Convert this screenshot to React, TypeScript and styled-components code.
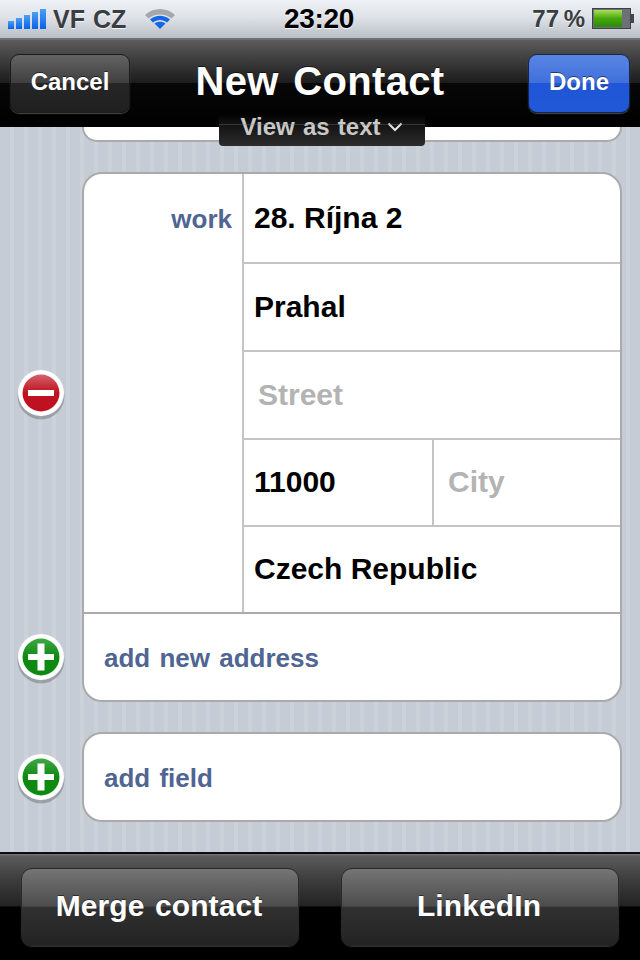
import styled, { createGlobalStyle } from 'styled-components';

const Global = createGlobalStyle`
  html, body { margin: 0; padding: 0; background: #000; }
  * { box-sizing: border-box; }
`

const Screen = styled.div`
  position: relative;
  display: flex;
  flex-direction: column;
  width: 640px;
  height: 960px;
  overflow: hidden;
  font-family: "Liberation Sans", Arial, sans-serif;
  font-weight: bold;
`

const StatusBar = styled.div`
  display: grid;
  grid-template-columns: 1fr auto 1fr;
  align-items: center;
  height: 38px;
  flex: none;
  padding: 0 6px;
  background: linear-gradient(#eef1f5 0%, #dfe3e8 45%, #b9bfc7 100%);
  color: #3a3d42;
  font-size: 24px;
  text-shadow: 0 1px 0 rgba(255, 255, 255, .8);
`

const StatusLeft = styled.div`
  display: flex;
  align-items: center;
  gap: 7px;
  padding-left: 2px;
`

const StatusRight = styled.div`
  display: flex;
  align-items: center;
  justify-content: flex-end;
  gap: 7px;
  word-spacing: -2px;
`

const Clock = styled.div`
  margin-right: 2px;
  color: #000;
  font-size: 28px;
  letter-spacing: -0.3px;
`

const Carrier = styled.span`
  margin-right: 11px;
  font-size: 25px;
  word-spacing: 1px;
`

const NavBar = styled.div`
  position: relative;
  display: grid;
  grid-template-columns: 1fr auto 1fr;
  align-items: center;
  height: 89px;
  flex: none;
  padding: 0 10px 1px 10px;
  border-top: 2px solid #6d6f72;
  background: linear-gradient(#5c5c5c 0%, #3a3a3a 25%, #1c1c1c 49%, #070707 50%, #000 100%);
`

const NavButton = styled.div<{ $primary?: boolean }>`
  display: flex;
  align-items: center;
  justify-content: center;
  justify-self: ${p => (p.$primary ? 'end' : 'start')};
  width: ${p => (p.$primary ? '102px' : '120px')};
  height: 59px;
  padding-bottom: 2px;
  border-radius: 9px;
  color: #fff;
  font-size: 24px;
  border: 1px solid ${p => (p.$primary ? '#16264a' : '#1b1b1b')};
  box-shadow: 0 1px 1px rgba(255, 255, 255, .28);
  background: ${p =>
    p.$primary
      ? 'linear-gradient(#5a86e2 0%, #3f6fdc 49%, #1f55d6 50%, #2059d8 100%)'
      : 'linear-gradient(#636363 0%, #3f3f3f 49%, #262626 50%, #202020 100%)'};
  text-shadow: 0 -1px 0 rgba(0, 0, 0, .5);
`

const Title = styled.div`
  padding-bottom: 4px;
  color: #fff;
  font-size: 40px;
  word-spacing: 3px;
  letter-spacing: 0.35px;
  text-shadow: 0 -1px 0 rgba(0, 0, 0, .6);
`

const ViewTab = styled.div`
  position: absolute;
  top: 113px;
  left: 219px;
  display: flex;
  align-items: center;
  justify-content: center;
  gap: 7px;
  width: 206px;
  height: 33px;
  padding-bottom: 6px;
  border-radius: 0 0 4px 4px;
  background: linear-gradient(#000 0%, #111 30%, #2c2c2c 100%);
  color: #c9c9c9;
  font-size: 24px;
  word-spacing: 1.5px;

  &::after {
    content: "";
    position: absolute;
    top: 11px;
    left: 0;
    right: 0;
    height: 1px;
    background: rgba(120, 120, 120, .35);
  }
`

const Content = styled.div`
  flex: 1;
  display: flex;
  flex-direction: column;
  gap: 30px;
  padding-right: 18px;
  overflow: hidden;
  background: repeating-linear-gradient(90deg, #c5ccd5 0 10px, #cbd2da 10px 14px);
`

const TopCardEdge = styled.div`
  height: 15px;
  margin-left: 82px;
  background: #fff;
  border: 2px solid #aaa;
  border-top: 0;
  border-radius: 0 0 20px 20px;
`

const Section = styled.div`
  display: grid;
  grid-template-columns: 82px 1fr;
`

const Gutter = styled.div`
  display: flex;
  flex-direction: column;
`

const GutterSlot = styled.div<{ $height: number }>`
  display: flex;
  align-items: center;
  justify-content: center;
  height: ${p => p.$height}px;
`

const Card = styled.div`
  background: #fff;
  border: 2px solid #aaa;
  border-radius: 20px;
  overflow: hidden;
`

const AddressBlock = styled.div`
  display: grid;
  grid-template-columns: 160px 1fr;
  border-bottom: 2px solid #aaa;
`

const LabelCell = styled.div`
  padding: 30px 10px 0 0;
  text-align: right;
  color: #4f6592;
  font-size: 26px;
  border-right: 2px solid #c4c4c4;
`

const FieldRow = styled.div<{ $height: number; $last?: boolean }>`
  display: flex;
  height: ${p => p.$height}px;
  border-bottom: ${p => (p.$last ? '0' : '2px solid #c4c4c4')};
`

const Field = styled.div<{ $placeholder?: boolean; $width?: number }>`
  display: flex;
  align-items: center;
  flex: ${p => (p.$width ? 'none' : '1')};
  width: ${p => (p.$width ? `${p.$width}px` : 'auto')};
  padding: 0 0 1px ${p => (p.$placeholder ? '14px' : '10px')};
  color: ${p => (p.$placeholder ? '#b3b3b3' : '#000')};
  font-size: 30px;
  ${p => (p.$width ? 'border-right: 2px solid #c4c4c4;' : '')}
`

const AddRow = styled.div`
  display: flex;
  align-items: center;
  height: 86px;
  padding: 2px 0 0 20px;
  color: #4f6592;
  font-size: 26px;
  word-spacing: 2px;
`

const Toolbar = styled.div`
  display: flex;
  justify-content: space-between;
  height: 108px;
  flex: none;
  padding: 14px 21px 0;
  border-top: 2px solid #0c0c0c;
  background: linear-gradient(#6f6f6f 0 1px, #5b5b5b 2px, #3c3c3c 25%, #232323 49%, #000 50%, #000 100%);
`

const ToolButton = styled.div`
  display: flex;
  align-items: center;
  justify-content: center;
  width: 278px;
  height: 78px;
  padding: 0 2px 2px 0;
  border-radius: 11px;
  border: 1px solid #2a2a2a;
  box-shadow: 0 1px 1px rgba(255, 255, 255, .2);
  background: linear-gradient(#757575 0%, #4c4c4c 49%, #313131 50%, #232323 100%);
  color: #fff;
  font-size: 30px;
  letter-spacing: 0.1px;
  word-spacing: 2px;
  text-shadow: 0 -1px 0 rgba(0, 0, 0, .5);
`

const SignalIcon = () => (
  <svg width="38" height="24" viewBox="0 0 38 24">
    <defs>
      <linearGradient id="sig" x1="0" y1="0" x2="0" y2="1">
        <stop offset="0" stopColor="#4aa0f5" />
        <stop offset="1" stopColor="#0a62e6" />
      </linearGradient>
    </defs>
    {[0, 1, 2, 3, 4].map(i => (
      <rect key={i} x={i * 8} y={14 - i * 3} width="6" height={8 + i * 3} fill="url(#sig)" />
    ))}
  </svg>
)

const WifiIcon = () => (
  <svg width="32" height="24" viewBox="0 0 32 24">
    <path d="M1 8 C9 0 23 0 31 8 L27.5 11.5 C21 6 11 6 4.5 11.5 Z" fill="#a4a8ad" />
    <path d="M6 12.5 C12 7.5 20 7.5 26 12.5 L23 15.5 C19 12 13 12 9 15.5 Z" fill="#1466e6" />
    <path d="M10.5 16.5 C13.5 14.2 18.5 14.2 21.5 16.5 L16 22 Z" fill="#1466e6" />
  </svg>
)

const BatteryIcon = () => (
  <svg width="42" height="22" viewBox="0 0 42 22">
    <defs>
      <linearGradient id="bat" x1="0" y1="0" x2="0" y2="1">
        <stop offset="0" stopColor="#a6e05a" />
        <stop offset=".5" stopColor="#46a80c" />
        <stop offset="1" stopColor="#2c8a06" />
      </linearGradient>
    </defs>
    <rect x="0.5" y="0.5" width="38" height="20" fill="#6d7076" stroke="#3e4046" />
    <rect x="2" y="2" width="28" height="17" fill="url(#bat)" />
    <rect x="39" y="6" width="3" height="9" fill="#44474c" />
  </svg>
)

const RoundBadge = ({ color, light, plus }: { color: string; light: string; plus?: boolean }) => {
  const id = plus ? 'badgePlus' : 'badgeMinus'
  return (
    <svg width="52" height="54" viewBox="0 0 52 54">
      <defs>
        <linearGradient id={id} x1="0" y1="0" x2="0" y2="1">
          <stop offset="0" stopColor={light} />
          <stop offset=".5" stopColor={color} />
          <stop offset="1" stopColor={color} />
        </linearGradient>
      </defs>
      <circle cx="26" cy="30" r="23.5" fill="#000" opacity=".22" />
      <circle cx="26" cy="27" r="23" fill="#fff" />
      <circle cx="26" cy="27" r="18.5" fill={`url(#${id})`} />
      <rect x="13" y="24" width="26" height="6" fill="#fff" />
      {plus && <rect x="22.5" y="13.5" width="7" height="27" fill="#fff" />}
    </svg>
  )
}

const Chevron = () => (
  <svg width="16" height="10" viewBox="0 0 16 10">
    <path d="M1.5 1.5 L8 8 L14.5 1.5" fill="none" stroke="#e4e4e4" strokeWidth="2" />
  </svg>
)

function App() {
  return (
    <Screen>
      <Global />
      <StatusBar>
        <StatusLeft>
          <SignalIcon />
          <Carrier>VF CZ</Carrier>
          <WifiIcon />
        </StatusLeft>
        <Clock>23:20</Clock>
        <StatusRight>
          <span>77 %</span>
          <BatteryIcon />
        </StatusRight>
      </StatusBar>
      <NavBar>
        <NavButton>Cancel</NavButton>
        <Title>New Contact</Title>
        <NavButton $primary>Done</NavButton>
      </NavBar>
      <ViewTab>
        View as text <Chevron />
      </ViewTab>
      <Content>
        <TopCardEdge />
        <Section>
          <Gutter>
            <GutterSlot $height={442}>
              <RoundBadge color="#bf1220" light="#d4606c" />
            </GutterSlot>
            <GutterSlot $height={86}>
              <RoundBadge color="#0e8a12" light="#40a844" plus />
            </GutterSlot>
          </Gutter>
          <Card>
            <AddressBlock>
              <LabelCell>work</LabelCell>
              <div>
                <FieldRow $height={90}><Field>28. Ríjna 2</Field></FieldRow>
                <FieldRow $height={88}><Field>Prahal</Field></FieldRow>
                <FieldRow $height={88}><Field $placeholder>Street</Field></FieldRow>
                <FieldRow $height={87}>
                  <Field $width={190}>11000</Field>
                  <Field $placeholder>City</Field>
                </FieldRow>
                <FieldRow $height={85} $last><Field>Czech Republic</Field></FieldRow>
              </div>
            </AddressBlock>
            <AddRow>add new address</AddRow>
          </Card>
        </Section>
        <Section>
          <Gutter>
            <GutterSlot $height={90}>
              <RoundBadge color="#0e8a12" light="#40a844" plus />
            </GutterSlot>
          </Gutter>
          <Card>
            <AddRow>add field</AddRow>
          </Card>
        </Section>
      </Content>
      <Toolbar>
        <ToolButton>Merge contact</ToolButton>
        <ToolButton>LinkedIn</ToolButton>
      </Toolbar>
    </Screen>
  )
}

export default App
